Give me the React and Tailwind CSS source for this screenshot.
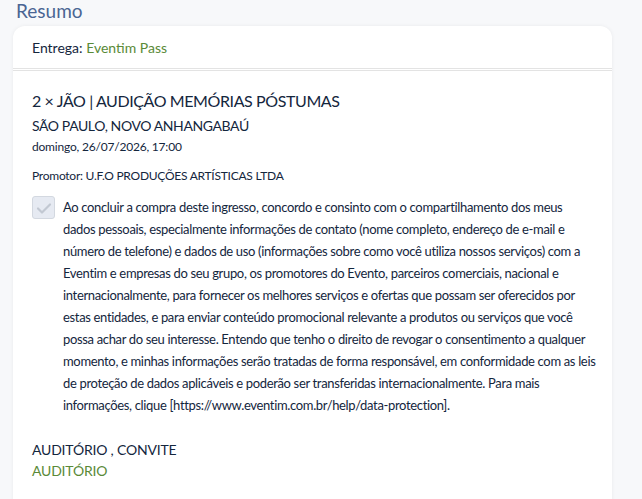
import React from "react";

const linhas = [
  "Ao concluir a compra deste ingresso, concordo e consinto com o compartilhamento dos meus",
  "dados pessoais, especialmente informações de contato (nome completo, endereço de e-mail e",
  "número de telefone) e dados de uso (informações sobre como você utiliza nossos serviços) com a",
  "Eventim e empresas do seu grupo, os promotores do Evento, parceiros comerciais, nacional e",
  "internacionalmente, para fornecer os melhores serviços e ofertas que possam ser oferecidos por",
  "estas entidades, e para enviar conteúdo promocional relevante a produtos ou serviços que você",
  "possa achar do seu interesse. Entendo que tenho o direito de revogar o consentimento a qualquer",
  "momento, e minhas informações serão tratadas de forma responsável, em conformidade com as leis",
  "de proteção de dados aplicáveis e poderão ser transferidas internacionalmente. Para mais",
  "informações, clique [https://www.eventim.com.br/help/data-protection].",
];

export default function App() {
  return (
    <div
      className="min-h-[499px] bg-[#f7f8fa] text-[#14263d] overflow-hidden"
      style={{ fontFamily: 'Lato, "Open Sans", sans-serif' }}
    >
      <h2 className="pl-4 text-[19px] leading-[22px] text-[#4a6593]">Resumo</h2>
      <div className="mx-[13px] mt-[4px] w-[599px] bg-white rounded-t-[12px] shadow-[0_0_4px_rgba(0,0,0,0.06)] min-h-[480px]">
        <div className="px-[19px] pt-[13px] pb-[11px] text-[14px] leading-[18px]">
          Entrega: <span className="text-[#5a8a37]">Eventim Pass</span>
        </div>
        <div className="h-[3px] border-t border-b border-[#e3e3e3]"></div>
        <div className="px-[19px] pt-[19px]">
          <div className="text-[16px] leading-[22px] tracking-[-0.4px]">2 × JÃO | AUDIÇÃO MEMÓRIAS PÓSTUMAS</div>
          <div className="mt-[4px] text-[14px] leading-[20px] tracking-[-0.4px]">SÃO PAULO, NOVO ANHANGABAÚ</div>
          <div className="mt-[2px] text-[12px] leading-[18px] tracking-[-0.2px]">domingo, 26/07/2026, 17:00</div>
          <div className="mt-[11px] text-[12px] leading-[18px] tracking-[-0.25px]">Promotor: U.F.O PRODUÇÕES ARTÍSTICAS LTDA</div>
          <div className="mt-[11px] flex gap-[8px]">
            <div className="w-[23px] h-[23px] shrink-0 rounded-[3px] border border-[#d3d8e0] bg-[#e6eaf2] flex items-center justify-center">
              <svg width="18" height="18" viewBox="0 0 18 18" fill="none">
                <path d="M3 9.5 L7 13.5 L15 5.5" stroke="#c2c8d2" strokeWidth="2.2" strokeLinecap="round" strokeLinejoin="round" />
              </svg>
            </div>
            <p className="text-[13px] leading-[22px] tracking-[-0.34px] whitespace-nowrap">
              {linhas.map((l, i) => (
                <span key={i} className="block">{l}</span>
              ))}
            </p>
          </div>
          <div className="mt-[23px] text-[14px] leading-[21px] tracking-[-0.2px]">AUDITÓRIO , CONVITE</div>
          <div className="text-[14px] leading-[21px] tracking-[-0.2px] text-[#5a8a37]">AUDITÓRIO</div>
        </div>
      </div>
    </div>
  );
}
